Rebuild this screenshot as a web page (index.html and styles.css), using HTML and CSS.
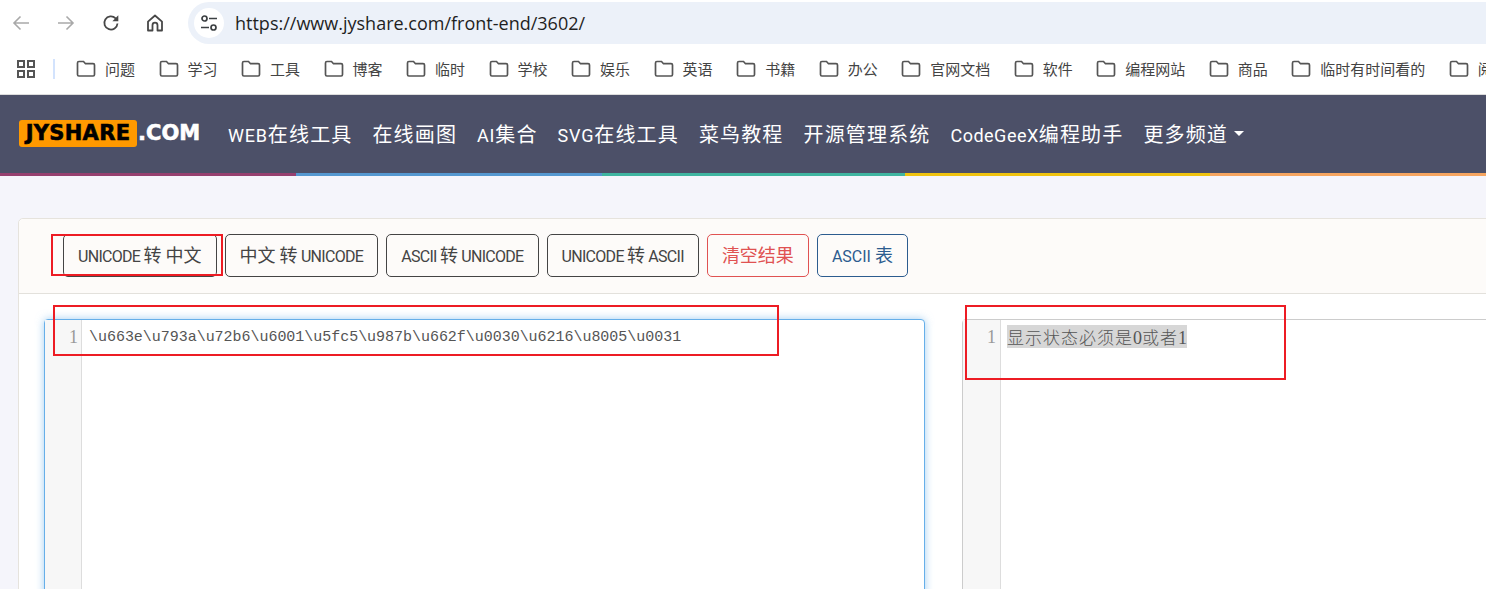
FILE: index.html
```html
<!DOCTYPE html>
<html lang="zh">
<head>
<meta charset="utf-8">
<title>Unicode 转中文</title>
<link rel="stylesheet" href="styles.css">
</head>
<body>
<svg class="defs" width="0" height="0" aria-hidden="true">
  <symbol id="folder" viewBox="0 0 20 18"><path d="M2.900 1.500h4.600l2 2.200h7.600c.8 0 1.400.6 1.400 1.400v9.500c0 .8-.6 1.400-1.400 1.400H2.900c-.8 0-1.400-.6-1.400-1.400V2.900c0-.8.6-1.400 1.400-1.400z" fill="none" stroke="currentColor" stroke-width="1.700"/></symbol>
</svg>
<header class="toolbar">
  <svg class="tb-icon dim" viewBox="0 0 20 20"><path d="M18 10H3M9.500 3.500 3 10l6.500 6.500" fill="none" stroke="currentColor" stroke-width="1.600"/></svg>
  <svg class="tb-icon dim" viewBox="0 0 20 20"><path d="M2 10h15M10.500 3.500 17 10l-6.500 6.500" fill="none" stroke="currentColor" stroke-width="1.600"/></svg>
  <svg class="tb-icon" viewBox="0 0 20 20"><path d="M16.500 10.500a6.600 6.600 0 1 1-1.900-5.200L16.500 7" fill="none" stroke="currentColor" stroke-width="1.800"/><path d="M17.300 2.300v5.900h-5.900z" fill="currentColor"/></svg>
  <svg class="tb-icon" viewBox="0 0 20 20"><path d="M3 8.600 10 2.500l7 6.100v8.900h-4.500v-5.300a2.500 2.500 0 0 0-5 0v5.300H3z" fill="none" stroke="currentColor" stroke-width="1.800" stroke-linejoin="round"/></svg>
  <div class="address">
    <span class="tune"><svg viewBox="0 0 20 20" width="20" height="20"><g fill="none" stroke="#3c4043" stroke-width="1.700"><circle cx="5.500" cy="5.500" r="2.500"/><circle cx="14.500" cy="14.500" r="2.500"/><path d="M10 5.500h8M2 14.500h8"/></g></svg></span>
    <span class="url">https://www.jyshare.com/front-end/3602/</span>
  </div>
</header>
<nav class="bookmarks">
  <svg class="apps" viewBox="0 0 18 18"><g fill="none" stroke="currentColor" stroke-width="2"><rect x="1" y="1" width="6" height="6"/><rect x="11" y="1" width="6" height="6"/><rect x="1" y="11" width="6" height="6"/><rect x="11" y="11" width="6" height="6"/></g></svg>
  <span class="sep"></span>
  <a class="bm"><svg class="folder"><use href="#folder"/></svg>问题</a>
  <a class="bm"><svg class="folder"><use href="#folder"/></svg>学习</a>
  <a class="bm"><svg class="folder"><use href="#folder"/></svg>工具</a>
  <a class="bm"><svg class="folder"><use href="#folder"/></svg>博客</a>
  <a class="bm"><svg class="folder"><use href="#folder"/></svg>临时</a>
  <a class="bm"><svg class="folder"><use href="#folder"/></svg>学校</a>
  <a class="bm"><svg class="folder"><use href="#folder"/></svg>娱乐</a>
  <a class="bm"><svg class="folder"><use href="#folder"/></svg>英语</a>
  <a class="bm"><svg class="folder"><use href="#folder"/></svg>书籍</a>
  <a class="bm"><svg class="folder"><use href="#folder"/></svg>办公</a>
  <a class="bm"><svg class="folder"><use href="#folder"/></svg>官网文档</a>
  <a class="bm"><svg class="folder"><use href="#folder"/></svg>软件</a>
  <a class="bm"><svg class="folder"><use href="#folder"/></svg>编程网站</a>
  <a class="bm"><svg class="folder"><use href="#folder"/></svg>商品</a>
  <a class="bm"><svg class="folder"><use href="#folder"/></svg>临时有时间看的</a>
  <a class="bm"><svg class="folder"><use href="#folder"/></svg>阅读</a>
</nav>
<div class="site-nav">
  <div class="logo"><span class="logo-box">JYSHARE</span><span class="logo-com">.COM</span></div>
  <a class="nav-link"><span class="lat">WEB</span>在线工具</a>
  <a class="nav-link">在线画图</a>
  <a class="nav-link"><span class="lat">AI</span>集合</a>
  <a class="nav-link"><span class="lat">SVG</span>在线工具</a>
  <a class="nav-link">菜鸟教程</a>
  <a class="nav-link">开源管理系统</a>
  <a class="nav-link"><span class="lat tight">CodeGeeX</span>编程助手</a>
  <a class="nav-link more">更多频道<i class="caret"></i></a>
</div>
<div class="stripe"></div>
<main class="page">
  <section class="card">
    <div class="card-head">
      <button class="btn"><span class="lat">UNICODE </span>转 中文</button>
      <button class="btn">中文 转<span class="lat"> UNICODE</span></button>
      <button class="btn"><span class="lat">ASCII </span>转<span class="lat"> UNICODE</span></button>
      <button class="btn"><span class="lat">UNICODE </span>转<span class="lat"> ASCII</span></button>
      <button class="btn red">清空结果</button>
      <button class="btn blue"><span class="lat">ASCII </span>表</button>
    </div>
    <div class="card-body">
      <div class="editor focus">
        <div class="gutter">1</div>
        <div class="code">\u663e\u793a\u72b6\u6001\u5fc5\u987b\u662f\u0030\u6216\u8005\u0031</div>
      </div>
      <div class="editor result">
        <div class="gutter">1</div>
        <div class="code"><span class="sel"><span class="han">显示状态必须是</span><span class="num">0</span><span class="han">或者</span><span class="num">1</span></span></div>
      </div>
    </div>
  </section>
</main>
<div class="mark mark-btn"></div>
<div class="mark mark-in"></div>
<div class="mark mark-out"></div>
</body>
</html>
```
FILE: styles.css
```css
* { box-sizing: border-box; }
html, body { margin: 0; height: 589px; overflow: hidden; }
body { background: #f5f5fb; font-family: "Noto Sans CJK SC", "Noto Sans", sans-serif; position: relative; }
.defs { position: absolute; }

.toolbar { height: 47px; background: #fff; display: flex; align-items: center; padding: 0 0 1px 11px; }
.tb-icon { width: 20px; height: 20px; color: #474747; margin-right: 25px; flex: none; }
.tb-icon.dim { color: #a9a9a9; }
.tb-icon:nth-child(4) { margin-right: 23px; margin-left: -1px; }
.address { flex: 1; height: 42px; background: #ecf1f9; border-radius: 21px 0 0 21px; display: flex; align-items: center; padding-left: 6px; }
.tune { width: 30px; height: 30px; border-radius: 50%; background: #fff; display: flex; align-items: center; justify-content: center; }
.url { font-family: "Open Sans", sans-serif; font-size: 18px; color: #1f1f1f; margin-left: 11px; white-space: nowrap; }

.bookmarks { height: 48px; background: #fff; display: flex; align-items: center; padding-left: 17px; white-space: nowrap; font-size: 15px; color: #444; border-bottom: 1px solid #ddd; overflow: hidden; padding-bottom: 4px; }
.apps { width: 18px; height: 18px; color: #555; flex: none; }
.sep { width: 2px; height: 20px; background: #d3e3fd; margin: 0 21px 0 18px; flex: none; }
.bm { display: flex; align-items: center; margin-right: 23.500px; flex: none; }
.folder { width: 20px; height: 18px; color: #555; margin-right: 9px; }

.site-nav { height: 78px; background: #4c5068; display: flex; align-items: center; padding: 0 0 2px 19px; white-space: nowrap; }
.logo { display: flex; align-items: center; width: 209px; flex: none; font-family: "DejaVu Sans", sans-serif; font-weight: 700; font-size: 21px; }
.logo-box { background: #ff9900; color: #000; width: 118px; height: 27px; border-radius: 3px; text-align: center; line-height: 27px; -webkit-text-stroke: .6px #000; letter-spacing: .3px; }
.logo-com { color: #fff; margin-left: 1px; -webkit-text-stroke: .6px #fff; }
.nav-link { font-size: 20px; letter-spacing: 1.150px; color: #fff; margin-right: 20px; flex: none; }
.nav-link .lat { font-family: Roboto, sans-serif; font-size: 18px; letter-spacing: .8px; }
.nav-link .tight { letter-spacing: .5px; }
.more { display: flex; align-items: center; }
.caret { width: 0; height: 0; border: 5.500px solid transparent; border-top-color: #fff; border-bottom: 0; margin-left: 6px; }
.stripe { height: 3px; background: linear-gradient(90deg, #96406f 296px, #5598d0 296px 602px, #3fb5a0 602px 905px, #f0c30f 905px 1210px, #f6a560 1210px); }

.page { padding: 42px 0 0 18px; width: 1900px; }
.card { border: 1px solid #e6e3dd; border-radius: 5px 0 0 5px; background: #fff; height: 600px; }
.card-head { height: 75px; background: #fdfbf9; border-bottom: 1px solid #e3e1dc; border-radius: 5px 0 0 0; padding: 15px 0 0 44px; display: flex; align-items: flex-start; gap: 8px; }
.btn { height: 43px; padding: 0 14px 3px; background: transparent; border: 1px solid #444; border-radius: 5px; color: #444; font-family: "Noto Sans CJK SC", sans-serif; font-size: 18px; white-space: nowrap; flex: none; }
.btn .lat { font-family: Roboto, sans-serif; font-size: 16px; letter-spacing: -.7px; }
.btn.red { border-color: #e05252; color: #e05252; }
.btn.blue { border-color: #2c5c8f; color: #2c5c8f; }
.btn.blue .lat { letter-spacing: 0; }
.card-body { padding: 25px 0 0 25px; display: grid; grid-template-columns: 881px 881px; column-gap: 37px; }
.editor { height: 320px; border: 1px solid #ccc; border-radius: 4px; display: flex; background: #fff; font-family: "Liberation Mono", monospace; font-size: 15px; line-height: 23px; color: #555; }
.editor.focus { border-color: #66afe9; box-shadow: 0 0 8px rgba(102, 175, 233, .6); }
.gutter { width: 37px; flex: none; background: #f7f7f7; border-right: 1px solid #ddd; text-align: right; padding: 6px 3px 0 0; color: #999; font-family: "Liberation Serif", serif; font-size: 18px; }
.result .gutter { width: 38px; padding-right: 4px; }
.code { padding: 6px 0 0 7px; white-space: nowrap; letter-spacing: -.03px; }
.result .code { padding: 5px 0 0 6px; }
.sel { background: #d7d7d7; display: block; width: fit-content; height: 23px; }
.han { font-family: "Noto Sans CJK SC", sans-serif; font-size: 17px; letter-spacing: 1px; font-weight: 300; vertical-align: 2px; }
.num { font-family: "Liberation Serif", serif; font-size: 18px; letter-spacing: 0; vertical-align: 2px; }

.mark { position: absolute; border: 2px solid #ed1c24; }
.mark-btn { left: 51px; top: 234px; width: 172px; height: 42px; }
.mark-in { left: 53px; top: 305px; width: 726px; height: 51px; }
.mark-out { left: 965px; top: 305px; width: 321px; height: 75px; }
```
